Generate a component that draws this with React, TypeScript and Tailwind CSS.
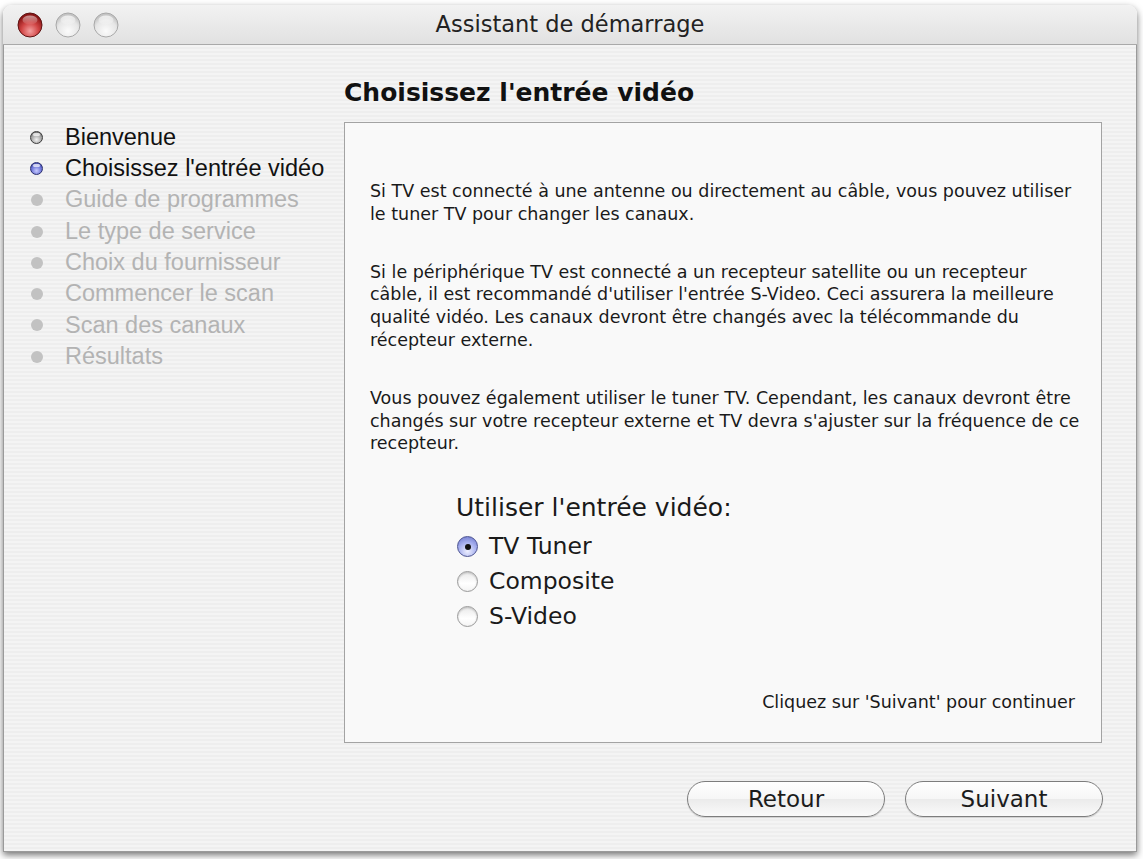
import React from "react";

const steps = [
  { label: "Bienvenue", state: "done" },
  { label: "Choisissez l'entrée vidéo", state: "current" },
  { label: "Guide de programmes", state: "todo" },
  { label: "Le type de service", state: "todo" },
  { label: "Choix du fournisseur", state: "todo" },
  { label: "Commencer le scan", state: "todo" },
  { label: "Scan des canaux", state: "todo" },
  { label: "Résultats", state: "todo" },
];

const paragraphs = [
  [
    "Si TV est connecté à une antenne ou directement au câble, vous pouvez utiliser",
    "le tuner TV pour changer les canaux.",
  ],
  [
    "Si le périphérique TV est connecté a un recepteur satellite ou un recepteur",
    "câble, il est recommandé d'utiliser l'entrée S-Video. Ceci assurera la meilleure",
    "qualité vidéo. Les canaux devront être changés avec la télécommande du",
    "récepteur externe.",
  ],
  [
    "Vous pouvez également utiliser le tuner TV. Cependant, les canaux devront être",
    "changés sur votre recepteur externe et TV devra s'ajuster sur la fréquence de ce",
    "recepteur.",
  ],
];

const inputs = ["TV Tuner", "Composite", "S-Video"];

const TrafficLight = ({ color }: { color: "red" | "grey" }) => (
  <svg width="26" height="26" viewBox="0 0 26 26">
    <defs>
      <radialGradient id="redBody" cx="50%" cy="75%" r="65%">
        <stop offset="0%" stopColor="#f4a0a0" />
        <stop offset="55%" stopColor="#d04444" />
        <stop offset="100%" stopColor="#8a1515" />
      </radialGradient>
      <radialGradient id="greyBody" cx="50%" cy="75%" r="65%">
        <stop offset="0%" stopColor="#fbfbfb" />
        <stop offset="70%" stopColor="#e6e6e6" />
        <stop offset="100%" stopColor="#c4c4c4" />
      </radialGradient>
      <linearGradient id="shine" x1="0" y1="0" x2="0" y2="1">
        <stop offset="0%" stopColor="#ffffff" stopOpacity="0.9" />
        <stop offset="100%" stopColor="#ffffff" stopOpacity="0.1" />
      </linearGradient>
    </defs>
    <circle
      cx="13"
      cy="13"
      r="12"
      fill={color === "red" ? "url(#redBody)" : "url(#greyBody)"}
      stroke={color === "red" ? "#5e1414" : "#a8a8a8"}
      strokeWidth="1"
    />
    <ellipse cx="13" cy="8" rx="7.5" ry="4.5" fill="url(#shine)" opacity={color === "red" ? 0.6 : 0.8} />
  </svg>
);

const StepBullet = ({ state }: { state: string }) => {
  if (state === "todo") {
    return <span className="w-[12px] h-[12px] rounded-full bg-[#c2c2c2]" />;
  }
  if (state === "current") {
    return (
      <span className="w-[13px] h-[13px] rounded-full border border-[#2a2f6e] bg-[radial-gradient(circle_at_50%_70%,#c7cbff_0%,#6a72d6_55%,#2e3690_100%)] flex justify-center">
        <span className="mt-[1px] w-[7px] h-[3px] rounded-full bg-white/70" />
      </span>
    );
  }
  return (
    <span className="w-[13px] h-[13px] rounded-full border border-[#3c3c3c] bg-[radial-gradient(circle_at_50%_70%,#f2f2f2_0%,#9c9c9c_60%,#555_100%)] flex justify-center">
      <span className="mt-[1px] w-[7px] h-[3px] rounded-full bg-white/70" />
    </span>
  );
};

const Radio = ({ checked }: { checked: boolean }) =>
  checked ? (
    <span className="w-[21px] h-[21px] shrink-0 rounded-full border border-[#4b5290] bg-[radial-gradient(circle_at_50%_75%,#eef0ff_0%,#a9b2ef_50%,#6570c9_100%)] flex items-center justify-center">
      <span className="w-[6px] h-[6px] rounded-full bg-[#111]" />
    </span>
  ) : (
    <span className="w-[21px] h-[21px] shrink-0 rounded-full border border-[#9a9a9a] bg-[linear-gradient(to_bottom,#e9e9e9,#ffffff_60%,#f4f4f4)] shadow-[inset_0_1px_2px_rgba(0,0,0,0.2)]" />
  );

const PillButton = ({ label }: { label: string }) => (
  <button className="w-[198px] h-[36px] rounded-full border border-[#7d7d7d] bg-[linear-gradient(to_bottom,#ffffff_0%,#f6f6f6_50%,#ebebeb_51%,#fafafa_100%)] shadow-[0_1px_1px_rgba(0,0,0,0.15)] text-[23px] text-[#1c1c1c] font-['DejaVu_Sans',sans-serif] leading-none">
    {label}
  </button>
);

export default function App() {
  return (
    <div className="w-[1143px] h-[859px] bg-white pl-[3px] pt-[5px] overflow-hidden">
      <div className="w-[1134px] h-[847px] rounded-t-[9px] shadow-[0_3px_7px_rgba(0,0,0,0.55)] flex flex-col overflow-hidden">
        {/* title bar */}
        <div className="h-[40px] shrink-0 flex items-center px-[14px] bg-[linear-gradient(to_bottom,#f2f2f2,#e1e1e1)] border-b border-[#a9a9a9] relative">
          <div className="flex gap-[12px] z-10">
            <TrafficLight color="red" />
            <TrafficLight color="grey" />
            <TrafficLight color="grey" />
          </div>
          <div className="absolute inset-0 flex items-center justify-center text-[22.5px] text-[#222] font-['DejaVu_Sans',sans-serif]">
            Assistant de démarrage
          </div>
        </div>

        {/* body */}
        <div className="flex-1 flex flex-col bg-[repeating-linear-gradient(to_bottom,#f4f4f4_0px,#f4f4f4_2px,#eeeeee_2px,#eeeeee_4px)] border-x border-b border-[#9a9a9a]">
          <div className="flex">
            <ul className="w-[340px] pt-[77px] pl-[26px] flex flex-col font-['Liberation_Sans',sans-serif] text-[23.5px]">
              {steps.map((s) => (
                <li key={s.label} className="h-[31.3px] flex items-center gap-[22px]">
                  <span className="w-[13px] flex justify-center">
                    <StepBullet state={s.state} />
                  </span>
                  <span className={`leading-none ${s.state === "todo" ? "text-[#b3b3b3]" : "text-[#111]"}`}>{s.label}</span>
                </li>
              ))}
            </ul>

            <div className="w-[758px] flex flex-col">
              <h1 className="h-[77px] flex items-end pb-[17px] text-[25px] font-bold text-[#111] font-['DejaVu_Sans',sans-serif] leading-none">
                Choisissez l'entrée vidéo
              </h1>
              <div className="h-[621px] border border-[#a3a3a3] bg-[#f9f9f9] pl-[25px] pr-[26px] pt-[57px] flex flex-col font-['DejaVu_Sans',sans-serif] text-[17.5px] text-[#1a1a1a]">
                {paragraphs.map((p, i) => (
                  <p key={i} className={`leading-[22.8px] ${i > 0 ? "mt-[35px]" : ""}`}>
                    {p.map((line) => (
                      <span key={line} className="block whitespace-nowrap">
                        {line}
                      </span>
                    ))}
                  </p>
                ))}

                <div className="mt-[38px] pl-[86px] flex flex-col">
                  <div className="h-[30px] flex items-center text-[25px]">Utiliser l'entrée vidéo:</div>
                  <div className="mt-[6px] flex flex-col">
                    {inputs.map((name, i) => (
                      <label key={name} className="h-[35px] flex items-center gap-[11px] text-[23.5px] pl-[1px]">
                        <Radio checked={i === 0} />
                        {name}
                      </label>
                    ))}
                  </div>
                </div>

                <div className="mt-auto mb-[27px] text-right whitespace-nowrap">
                  Cliquez sur 'Suivant' pour continuer
                </div>
              </div>
            </div>
          </div>

          <div className="mt-[38px] w-[1099px] flex justify-end gap-[20px]">
            <PillButton label="Retour" />
            <PillButton label="Suivant" />
          </div>
        </div>
      </div>
    </div>
  );
}
